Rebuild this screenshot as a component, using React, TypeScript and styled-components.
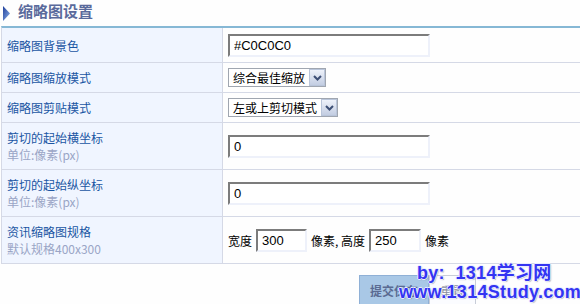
import React from "react";
import styled, { createGlobalStyle } from "styled-components";

const GlobalStyle = createGlobalStyle`
  html, body { margin: 0; padding: 0; background: #fefefe; }
  body {
    font-family: "Noto Sans CJK SC", "Noto Sans", sans-serif;
    font-size: 12px;
    overflow: hidden;
  }
`;

const Page = styled.div`
  position: relative;
  width: 580px;
  height: 304px;
  overflow: hidden;
  padding-left: 1px;
  box-sizing: border-box;
`;

const TitleBar = styled.div`
  height: 26px;
  display: flex;
  align-items: center;
  gap: 8px;
  padding-left: 2px;
`;

const Title = styled.h2`
  margin: 0;
  font-size: 15px;
  line-height: 18px;
  font-weight: bold;
  color: #5a6a9c;
  position: relative;
  top: -2px;
`;

const FormTable = styled.div`
  border-top: 2px solid #86b8d5;
  border-left: 1px solid #d5d9e6;
  width: 600px;
`;

const Row = styled.div<{ $h: number }>`
  display: flex;
  height: ${(p) => p.$h}px;
  border-bottom: 1px solid #d5d9e6;
  box-sizing: content-box;
`;

const LabelCell = styled.div`
  width: 221px;
  flex: none;
  box-sizing: border-box;
  padding: 0 5px;
  background: #f0f5ff;
  border-right: 1px solid #d5d9e6;
  display: flex;
  flex-direction: column;
  justify-content: center;
`;

const Label = styled.span`
  color: #1a55a3;
  line-height: 17px;
`;

const SubLabel = styled.span`
  color: #9aa5c6;
  line-height: 17px;
`;

const FieldCell = styled.div`
  flex: 1;
  display: flex;
  align-items: center;
  gap: 4px;
  padding-left: 5px;
  background: #fefefe;
  color: #000;
`;

const TextInput = styled.input<{ $w: number }>`
  width: ${(p) => p.$w}px;
  height: 23px;
  box-sizing: border-box;
  margin: 0;
  padding: 0 4px;
  border-style: solid;
  border-width: 2px;
  border-color: #7c7c7c #eef1fa #eef1fa #7c7c7c;
  background: #fff;
  font-family: "Liberation Sans", sans-serif;
  font-size: 13px;
  color: #000;
  outline: none;
`;

const SelectBox = styled.div`
  display: inline-flex;
  align-items: center;
  height: 19px;
  box-sizing: border-box;
  border: 1px solid #a0a6b0;
  background: #fff;
`;

const SelectText = styled.span`
  padding: 0 4px;
  line-height: 17px;
  color: #000;
`;

const ArrowBtn = styled.span`
  width: 16px;
  height: 17px;
  box-sizing: border-box;
  border: 1px solid #b9c5da;
  background: linear-gradient(#eef2fa, #c3cde2);
  display: flex;
  align-items: center;
  justify-content: center;
`;

const Unit = styled.span`
  color: #000;
  white-space: pre;
`;

const ButtonBar = styled.div`
  display: flex;
  padding: 11px 0 0 358px;
`;

const SubmitButton = styled.button`
  width: 70px;
  height: 30px;
  margin: 0;
  border: 1px solid #8fb0d6;
  background: #a9c8e6;
  color: #5a6b92;
  font-family: "Noto Sans CJK SC", sans-serif;
  font-size: 12px;
  font-weight: bold;
  padding: 0;
`;

const ResetButton = styled.button`
  width: 47px;
  height: 30px;
  margin: 0;
  border: 1px solid #c8cdd8;
  background: #fbfcff;
  color: #8a8f9e;
  font-family: "Noto Sans CJK SC", sans-serif;
  font-size: 12px;
  padding: 0;
`;

const Watermark = styled.div`
  position: absolute;
  left: 399px;
  top: 264px;
  font-family: "Liberation Sans", "Noto Sans CJK SC", sans-serif;
  font-weight: bold;
  font-size: 18px;
  line-height: 19px;
  letter-spacing: 0.3px;
  color: #3434f2;
  text-shadow: 1px 0 0 #e8ecff, -1px 0 0 #e8ecff, 0 1px 0 #e8ecff, 0 -1px 0 #e8ecff,
    1px 1px 1px rgba(80, 80, 120, 0.5);
  white-space: pre;
`;

const WatermarkLine = styled.div<{ $indent: number }>`
  padding-left: ${(p) => p.$indent}px;
`;

const Chevron = () => (
  <svg width="9" height="6" viewBox="0 0 9 6">
    <path d="M1 1 L4.5 4.5 L8 1" fill="none" stroke="#3d4f75" strokeWidth="2" />
  </svg>
);

const TriangleIcon = () => (
  <svg width="7" height="15" viewBox="0 0 7 15">
    <defs>
      <linearGradient id="tri" x1="0" y1="0" x2="1" y2="1">
        <stop offset="0" stopColor="#1f3f9a" />
        <stop offset="1" stopColor="#8db2ea" />
      </linearGradient>
    </defs>
    <polygon points="0,0 7,7.5 0,15" fill="url(#tri)" />
  </svg>
);

const Select = ({ text }: { text: string }) => (
  <SelectBox>
    <SelectText>{text}</SelectText>
    <ArrowBtn>
      <Chevron />
    </ArrowBtn>
  </SelectBox>
);

export default function App() {
  return (
    <Page>
      <GlobalStyle />
      <TitleBar>
        <TriangleIcon />
        <Title>缩略图设置</Title>
      </TitleBar>
      <FormTable>
        <Row $h={34}>
          <LabelCell>
            <Label>缩略图背景色</Label>
          </LabelCell>
          <FieldCell>
            <TextInput $w={202} defaultValue="#C0C0C0" />
          </FieldCell>
        </Row>
        <Row $h={29}>
          <LabelCell>
            <Label>缩略图缩放模式</Label>
          </LabelCell>
          <FieldCell>
            <Select text="综合最佳缩放" />
          </FieldCell>
        </Row>
        <Row $h={29}>
          <LabelCell>
            <Label>缩略图剪贴模式</Label>
          </LabelCell>
          <FieldCell>
            <Select text="左或上剪切模式" />
          </FieldCell>
        </Row>
        <Row $h={46}>
          <LabelCell>
            <Label>剪切的起始横坐标</Label>
            <SubLabel>单位:像素(px)</SubLabel>
          </LabelCell>
          <FieldCell>
            <TextInput $w={202} defaultValue="0" />
          </FieldCell>
        </Row>
        <Row $h={46}>
          <LabelCell>
            <Label>剪切的起始纵坐标</Label>
            <SubLabel>单位:像素(px)</SubLabel>
          </LabelCell>
          <FieldCell>
            <TextInput $w={202} defaultValue="0" />
          </FieldCell>
        </Row>
        <Row $h={46}>
          <LabelCell>
            <Label>资讯缩略图规格</Label>
            <SubLabel>默认规格400x300</SubLabel>
          </LabelCell>
          <FieldCell>
            <Unit>宽度</Unit>
            <TextInput $w={51} defaultValue="300" />
            <Unit>像素, 高度</Unit>
            <TextInput $w={52} defaultValue="250" />
            <Unit>像素</Unit>
          </FieldCell>
        </Row>
      </FormTable>
      <ButtonBar>
        <SubmitButton type="submit">提交保存</SubmitButton>
        <ResetButton type="reset">重置</ResetButton>
      </ButtonBar>
      <Watermark>
        <WatermarkLine $indent={18}>{"by:  1314学习网"}</WatermarkLine>
        <WatermarkLine $indent={0}>www.1314Study.com</WatermarkLine>
      </Watermark>
    </Page>
  );
}
